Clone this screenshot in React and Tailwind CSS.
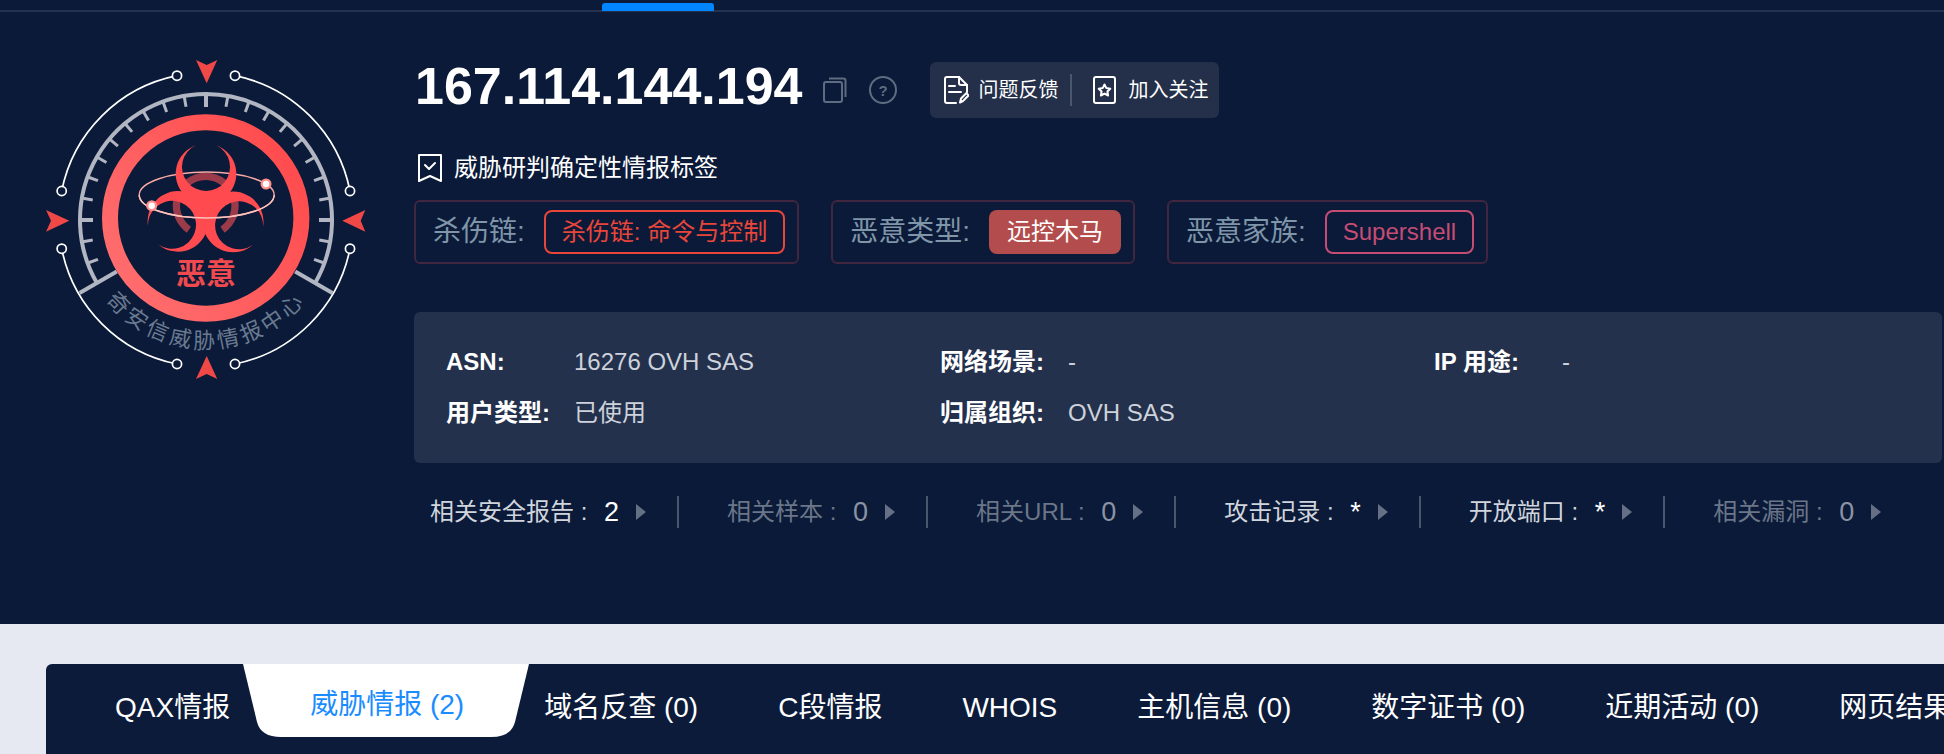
const FONT = "font-['Liberation_Sans','Noto_Sans_CJK_SC',sans-serif]";

// 0deg = right, clockwise on screen
function polar(r, deg) {
  const a = (deg * Math.PI) / 180;
  return [186 + r * Math.cos(a), 180 + r * Math.sin(a)];
}

function Logo() {
  const ticks = [];
  for (let d = 160; d <= 380; d += 10) {
    const major = d === 180 || d === 270 || d === 360;
    const [x1, y1] = polar(125, d);
    const [x2, y2] = polar(major ? 113 : 115, d);
    ticks.push(<line key={d} x1={x1} y1={y1} x2={x2} y2={y2} stroke="#b1b6c2" strokeWidth={major ? 4 : 3} />);
  }
  const crescent = "M175.7 105.3A30.3 30.3 0 1 0 196.3 105.3A24 24 0 1 1 175.7 105.3Z";
  const ringArc = (a, b) => {
    const [x1, y1] = [185.7 + 29.3 * Math.cos((a * Math.PI) / 180), 165.7 + 29.3 * Math.sin((a * Math.PI) / 180)];
    const [x2, y2] = [185.7 + 29.3 * Math.cos((b * Math.PI) / 180), 165.7 + 29.3 * Math.sin((b * Math.PI) / 180)];
    return `M${x1} ${y1}A29.3 29.3 0 0 1 ${x2} ${y2}`;
  };
  const dots = [[41.7, 151], [157, 35.7], [215, 35.7], [330, 151], [41.7, 208.7], [157, 324], [215, 324], [330, 208.7]];

  return (
    <svg width="370" height="360" viewBox="0 0 370 360" className="shrink-0">
      <defs>
        <linearGradient id="ringGrad" x1="0" y1="0.9" x2="1" y2="0.2">
          <stop offset="0" stopColor="#ff6f70" />
          <stop offset="1" stopColor="#ff4b4d" />
        </linearGradient>
        <path id="textArc" d="M74.6 244A128.5 128.5 0 0 0 297.4 244" />
      </defs>

      {/* outer white arcs */}
      <g fill="none" stroke="#fff" strokeWidth="1.7">
        <path d="M41.7 151A147 147 0 0 1 157 35.7" />
        <path d="M215 35.7A147 147 0 0 1 330 151" />
        <path d="M41.7 208.7A147 147 0 0 0 157 324" />
        <path d="M215 324A147 147 0 0 0 330 208.7" />
      </g>
      {dots.map(([x, y]) => (
        <circle key={`${x}-${y}`} cx={x} cy={y} r="4.6" fill="#0a1a38" stroke="#fff" strokeWidth="1.7" />
      ))}

      {/* arrows */}
      <g fill="#f04747">
        <path d="M176 20L186.7 25L197.3 20L186.7 43.3Z" />
        <path d="M176 339L186.7 334L197.3 339L186.7 316Z" />
        <path d="M26 170L31 180.7L26 191.7L49.3 180.7Z" />
        <path d="M345.3 170L340.7 180.7L345.3 191.7L322.3 180.7Z" />
      </g>

      {/* scale */}
      <path d={`M${polar(126, 150).join(" ")}A126 126 0 1 1 ${polar(126, 30).join(" ")}`} fill="none" stroke="#b1b6c2" strokeWidth="4" />
      {ticks}
      <line x1={polar(103, 150)[0]} y1={polar(103, 150)[1]} x2={polar(146, 150)[0]} y2={polar(146, 150)[1]} stroke="#b1b6c2" strokeWidth="4" />
      <line x1={polar(103, 30)[0]} y1={polar(103, 30)[1]} x2={polar(146, 30)[0]} y2={polar(146, 30)[1]} stroke="#b1b6c2" strokeWidth="4" />

      <circle cx="185.7" cy="178" r="95.7" fill="none" stroke="url(#ringGrad)" strokeWidth="16" />

      {/* biohazard */}
      <g fill="none" stroke="#9b3b4a" strokeWidth="7.3">
        <path d={ringArc(-130, -50)} />
        <path d={ringArc(125, 190)} />
        <path d={ringArc(-10, 55)} />
      </g>
      <ellipse cx="186.7" cy="155" rx="67.5" ry="23" fill="none" stroke="#f9a9a5" strokeWidth="1.4" />
      <g fill="#ff4b4f">
        <path d={crescent} />
        <path d={crescent} transform="rotate(-120 185.7 165.7)" />
        <path d={crescent} transform="rotate(120 185.7 165.7)" />
        <circle cx="185.7" cy="165.7" r="6" />
      </g>
      <path d="M119.2 155A67.5 23 0 0 0 254.2 155" fill="none" stroke="#ffc2bd" strokeWidth="1.4" />
      <circle cx="131.7" cy="165.7" r="5.5" fill="#ff8f8f" />
      <circle cx="131.7" cy="165.7" r="3.2" fill="#fff" />
      <circle cx="246" cy="144" r="5.5" fill="#ff8f8f" />
      <circle cx="246" cy="144" r="3.2" fill="#fff" />

      <text x="186" y="244" textAnchor="middle" fontSize="30" fontWeight="700" fill="#f04a4f" fontFamily="'Noto Sans CJK SC',sans-serif">恶意</text>
      <text fontSize="22" letterSpacing="3.5" fill="#6a7a91" fontFamily="'Noto Sans CJK SC',sans-serif">
        <textPath href="#textArc" startOffset="50%" textAnchor="middle">奇安信威胁情报中心</textPath>
      </text>
    </svg>
  );
}

function TagBox({ label, children }) {
  return (
    <div className="flex h-[64px] items-center rounded-md border-2 border-[#41263f] pl-[17px] pr-[12px]">
      <span className="mr-[19px] text-[28px] text-[#7f95a8]">{label}:</span>
      {children}
    </div>
  );
}

function Info({ label, value }) {
  return (
    <div className="flex w-[494px] text-[24px] leading-[30px]">
      <span className="w-[128px] font-bold text-white">{label}:</span>
      <span className="text-[#cdd2db]">{value}</span>
    </div>
  );
}

function Stat({ label, value, on, last }) {
  return (
    <div className={`flex h-[32px] items-center pl-[48px] pr-[31px] ${last ? "" : "border-r-2 border-[#4a566c]"}`}>
      <span className={`text-[24px] whitespace-pre ${on ? "text-[#d0d5dd]" : "text-[#6b7689]"}`}>{label} : </span>
      <span className={`ml-[10px] text-[27px] ${on ? "text-white" : "text-[#8b93a3]"}`}>{value}</span>
      <span className="ml-[17px] h-0 w-0 border-y-[8px] border-l-[10px] border-y-transparent border-l-[#667085]" />
    </div>
  );
}

const tabs = ["域名反查 (0)", "C段情报", "WHOIS", "主机信息 (0)", "数字证书 (0)", "近期活动 (0)", "网页结果 (0)"];

export default function App() {
  return (
    <div className={`h-[754px] w-full overflow-hidden bg-[#e6e9f2] ${FONT}`}>
      {/* header */}
      <div className="h-[624px] bg-[#0a1a38]">
        <div className="h-[12px] border-b-2 border-[#243250] pt-[3px] pl-[602px]">
          <div className="h-[8px] w-[112px] rounded-t-[3px] bg-[#0084ff]" />
        </div>

        <div className="flex pl-5">
          <div className="pt-[28px]">
            <Logo />
          </div>

          <div className="ml-[24px] flex-1 pt-[50px] pr-[2px]">
            {/* title */}
            <div className="flex h-[56px] items-center">
              <h1 className="mb-[8px] ml-[1px] text-[52px] leading-[46px] font-bold text-white">167.114.144.194</h1>
              <svg width="24" height="26" viewBox="0 0 24 26" className="ml-[20px]" fill="none" stroke="#5f6b80" strokeWidth="2">
                <rect x="1" y="5" width="18" height="20" rx="2" />
                <path d="M6 1.5h14.5a2 2 0 0 1 2 2V20" />
              </svg>
              <svg width="28" height="28" viewBox="0 0 28 28" className="ml-[22px]">
                <circle cx="14" cy="14" r="13" fill="none" stroke="#5f6b80" strokeWidth="2" />
                <text x="14" y="19.5" textAnchor="middle" fontSize="15" fontWeight="700" fill="#5f6b80" fontFamily="'Liberation Sans',sans-serif">?</text>
              </svg>
              <div className="ml-[33px] flex h-[56px] w-[289px] items-center rounded-md bg-[#242f4a] pl-[14px] text-[20px] text-white">
                <svg width="25" height="28" viewBox="0 0 25 28" fill="none" stroke="#fff" strokeWidth="2" strokeLinejoin="round" strokeLinecap="round">
                  <path d="M12 27H3a2 2 0 0 1-2-2V3a2 2 0 0 1 2-2h12l8 8v7" />
                  <path d="M15 1v6a2 2 0 0 0 2 2h6" />
                  <path d="M5 10h6M5 16h12" />
                  <path d="M16 26.5l1-4 5.5-5.5 2 2.5-5.5 5.5z" />
                </svg>
                <span className="ml-[10px]">问题反馈</span>
                <span className="ml-[11px] h-[32px] w-[2px] bg-[#4a566c]" />
                <svg width="23" height="28" viewBox="0 0 23 28" className="ml-[21px]" fill="none" stroke="#fff" strokeWidth="2">
                  <rect x="1" y="1" width="21" height="26" rx="2" />
                  <path d="M11.5 8.5l1.8 3.6 4 .6-2.9 2.8.7 4-3.6-1.9-3.6 1.9.7-4-2.9-2.8 4-.6z" strokeLinejoin="round" />
                </svg>
                <span className="ml-[13px]">加入关注</span>
              </div>
            </div>

            {/* tag heading */}
            <div className="mt-[36px] flex h-[28px] items-center">
              <svg width="24" height="28" viewBox="0 0 24 28" className="ml-[4px]" fill="none" stroke="#fff" strokeWidth="2" strokeLinejoin="round">
                <path d="M1 1h22v26l-11-5-11 5z" />
                <path d="M7 11l4 4 6-6" strokeLinecap="round" />
              </svg>
              <span className="ml-[12px] text-[24px] text-white">威胁研判确定性情报标签</span>
            </div>

            {/* tags */}
            <div className="mt-[18px] flex gap-[32px]">
              <TagBox label="杀伤链">
                <span className="flex h-[44px] items-center rounded-lg border-2 border-[#e8463a] px-[16px] text-[24px] text-[#e8463a]">杀伤链: 命令与控制</span>
              </TagBox>
              <TagBox label="恶意类型">
                <span className="flex h-[44px] items-center rounded-lg bg-[#b34d4d] px-[18px] text-[24px] text-white">远控木马</span>
              </TagBox>
              <TagBox label="恶意家族">
                <span className="flex h-[44px] items-center rounded-lg border-2 border-[#c64c74] px-[16px] text-[24px] text-[#c64c74]">Supershell</span>
              </TagBox>
            </div>

            {/* info panel */}
            <div className="mt-[48px] h-[151px] rounded-md bg-[#24314d] pt-[35px] pl-[32px]">
              <div className="flex">
                <Info label="ASN" value="16276 OVH SAS" />
                <Info label="网络场景" value="-" />
                <Info label="IP 用途" value="-" />
              </div>
              <div className="mt-[21px] flex">
                <Info label="用户类型" value="已使用" />
                <Info label="归属组织" value="OVH SAS" />
              </div>
            </div>

            {/* stats */}
            <div className="mt-[33px] -ml-[32px] flex">
              <Stat label="相关安全报告" value="2" on />
              <Stat label="相关样本" value="0" />
              <Stat label="相关URL" value="0" />
              <Stat label="攻击记录" value="*" on />
              <Stat label="开放端口" value="*" on />
              <Stat label="相关漏洞" value="0" last />
            </div>
          </div>
        </div>
      </div>

      {/* tab bar */}
      <div className="mt-[40px] ml-[46px] flex h-[90px] overflow-hidden rounded-tl-md bg-[#0c1b3a] pl-[29px] text-[28px] text-white whitespace-nowrap">
        <div className="flex h-[88px] items-center px-[40px]">QAX情报</div>
        <div className="relative flex h-[88px] items-center px-[40px] pb-[6px] text-[#1a8cff]">
          <svg width="286" height="73" viewBox="0 0 286 73" className="absolute top-0 -left-[27px]">
            <path d="M0 0H286L272 58Q268 73 248 73H38Q18 73 14 58Z" fill="#fff" />
          </svg>
          <span className="relative">威胁情报 (2)</span>
        </div>
        {tabs.map((t) => (
          <div key={t} className="flex h-[88px] items-center px-[40px]">{t}</div>
        ))}
      </div>
    </div>
  );
}
